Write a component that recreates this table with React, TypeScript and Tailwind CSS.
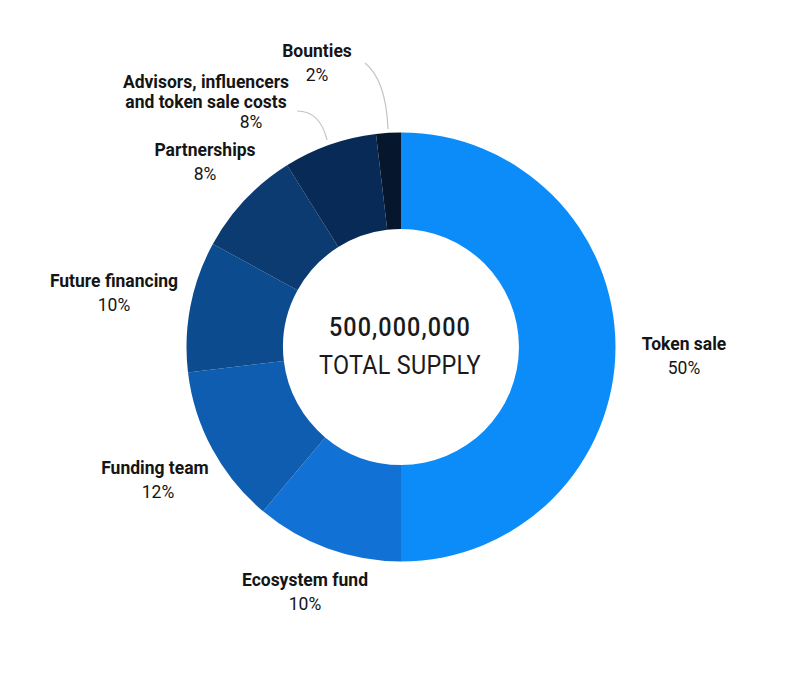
import React from "react";

const CX = 401;
const CY = 347;
const R_OUT = 214.5;
const R_IN = 118;

// slice boundaries in degrees, clockwise from 12 o'clock
const slices = [
  { from: 0, to: 180, color: "#0b8cf9" },
  { from: 180, to: 220, color: "#1271d4" },
  { from: 220, to: 263.2, color: "#0e5db0" },
  { from: 263.2, to: 298.7, color: "#0c4b8e" },
  { from: 298.7, to: 327.9, color: "#0b3b70" },
  { from: 327.9, to: 353.3, color: "#072b56" },
  { from: 353.3, to: 360, color: "#06162c" },
];

function pt(r: number, deg: number) {
  const a = (deg * Math.PI) / 180;
  return [CX + r * Math.sin(a), CY - r * Math.cos(a)];
}

function arcPath(from: number, to: number) {
  const large = to - from > 180 ? 1 : 0;
  const [x1, y1] = pt(R_OUT, from);
  const [x2, y2] = pt(R_OUT, to);
  const [x3, y3] = pt(R_IN, to);
  const [x4, y4] = pt(R_IN, from);
  return `M${x1} ${y1} A${R_OUT} ${R_OUT} 0 ${large} 1 ${x2} ${y2} L${x3} ${y3} A${R_IN} ${R_IN} 0 ${large} 0 ${x4} ${y4} Z`;
}

const font = { fontFamily: "Roboto, 'Liberation Sans', sans-serif" };

const App = () => {
  return (
    <div className="relative w-[800px] h-[682px] bg-white text-[#151515]" style={font}>
      <svg className="absolute inset-0" width="800" height="682" viewBox="0 0 800 682">
        {slices.map((s) => (
          <path key={s.from} d={arcPath(s.from, s.to)} fill={s.color} />
        ))}
        {/* leader lines */}
        <path d="M365 63 Q386 80 388 129" fill="none" stroke="#c4c4c4" strokeWidth="1.2" />
        <path d="M297 111 Q320 111 327 140" fill="none" stroke="#c4c4c4" strokeWidth="1.2" />
      </svg>

      {/* center */}
      <div className="absolute left-[250px] top-[312px] w-[300px] flex flex-col items-center gap-[8px] text-[#1a1a1a]">
        <div className="text-[26px] leading-[30px] font-medium tracking-[1.2px] scale-x-[0.9]">500,000,000</div>
        <div className="text-[26px] leading-[30px] font-normal tracking-[0.3px] scale-x-[0.9]">TOTAL SUPPLY</div>
      </div>

      {/* labels */}
      <div className="absolute left-[217px] top-[39px] w-[200px] text-center text-[17.5px] leading-6">
        <div className="font-bold">Bounties</div>
        <div>2%</div>
      </div>

      <div className="absolute left-[106px] top-[72px] w-[200px] text-center text-[17.5px] leading-5 font-bold">
        <div>Advisors, influencers</div>
        <div>and token sale costs</div>
      </div>
      <div className="absolute left-[201px] top-[112px] w-[100px] text-center text-[17.5px] leading-5">8%</div>

      <div className="absolute left-[105px] top-[138px] w-[200px] text-center text-[17.5px] leading-6">
        <div className="font-bold">Partnerships</div>
        <div>8%</div>
      </div>

      <div className="absolute left-[14px] top-[269px] w-[200px] text-center text-[17.5px] leading-6">
        <div className="font-bold">Future financing</div>
        <div>10%</div>
      </div>

      <div className="absolute left-[55px] top-[456px] w-[200px] text-center text-[17.5px] leading-6">
        <div className="font-bold">Funding team</div>
        <div className="pl-[6px]">12%</div>
      </div>

      <div className="absolute left-[205px] top-[568px] w-[200px] text-center text-[17.5px] leading-6">
        <div className="font-bold">Ecosystem fund</div>
        <div>10%</div>
      </div>

      <div className="absolute left-[584px] top-[332px] w-[200px] text-center text-[17.5px] leading-6">
        <div className="font-bold">Token sale</div>
        <div>50%</div>
      </div>
    </div>
  );
};

export default App;
